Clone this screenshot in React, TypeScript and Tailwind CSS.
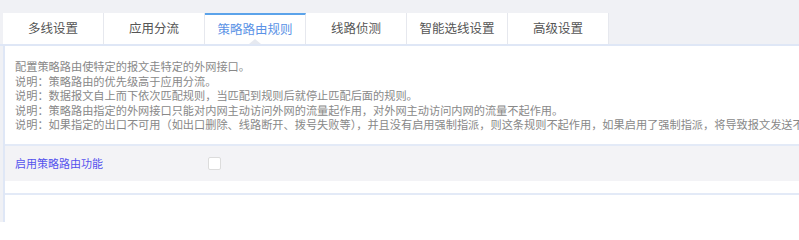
import React, { useState } from 'react';

const tabs = ['多线设置', '应用分流', '策略路由规则', '线路侦测', '智能选线设置', '高级设置'];

const notes = [
  '配置策略路由使特定的报文走特定的外网接口。',
  '说明：策略路由的优先级高于应用分流。',
  '说明：数据报文自上而下依次匹配规则，当匹配到规则后就停止匹配后面的规则。',
  '说明：策略路由指定的外网接口只能对内网主动访问外网的流量起作用，对外网主动访问内网的流量不起作用。',
  '说明：如果指定的出口不可用（如出口删除、线路断开、拨号失败等），并且没有启用强制指派，则这条规则不起作用，如果启用了强制指派，将导致报文发送不出去。',
];

const App: React.FC = () => {
  const [active, setActive] = useState(2);
  const [enabled, setEnabled] = useState(false);

  return (
    <div className="w-[799px] h-[222px] overflow-hidden bg-[#f0f1f5] pt-[13px] font-['Noto_Sans_CJK_SC','Noto_Sans',sans-serif]">
      {/* Tabs */}
      <div className="flex h-[31px] pl-[3px]">
        {tabs.map((tab, index) => (
          <button
            key={tab}
            type="button"
            onClick={() => setActive(index)}
            className={`relative w-[101px] h-full bg-white border-r border-[#e6e8ee] text-[12.5px] leading-none flex items-center justify-center ${
              active === index ? 'border-t-2 border-t-[#5ba3ea] text-[#5a92e6]' : 'text-[#555]'
            }`}
          >
            {tab}
            {active === index && (
              <span className="absolute bottom-0 left-1/2 -translate-x-1/2 w-0 h-0 border-x-[6px] border-x-transparent border-b-[5px] border-b-[#e6e9f0]" />
            )}
          </button>
        ))}
      </div>

      {/* Content */}
      <div className="border-t-2 border-[#dfe7f6]">
        <div className="ml-[3px] bg-white border-l-2 border-[#dfe7f6] h-[200px]">
          <div className="pt-[13px] pb-[12px] pl-[10px] text-[11.2px] leading-[14.6px] text-[#888]">
            {notes.map(line => (
              <p key={line} className="whitespace-nowrap">{line}</p>
            ))}
          </div>

          <div className="border-t-2 border-[#e3eaf7]">
            <div className="h-[35px] bg-[#f3f3f6] flex items-center pl-[10px]">
              <span className="w-[193px] text-[11px] leading-none text-[#5552ee]">启用策略路由功能</span>
              <input
                type="checkbox"
                checked={enabled}
                onChange={e => setEnabled(e.target.checked)}
                className="appearance-none w-[13px] h-[13px] bg-white border border-[#dcdcdc] rounded-[2px] checked:bg-[#5a92e6] checked:border-[#5a92e6]"
              />
            </div>
            <div className="h-[12px] bg-white" />
            <div className="border-t-2 border-[#e3eaf7]" />
          </div>
        </div>
      </div>
    </div>
  );
};

export default App;
